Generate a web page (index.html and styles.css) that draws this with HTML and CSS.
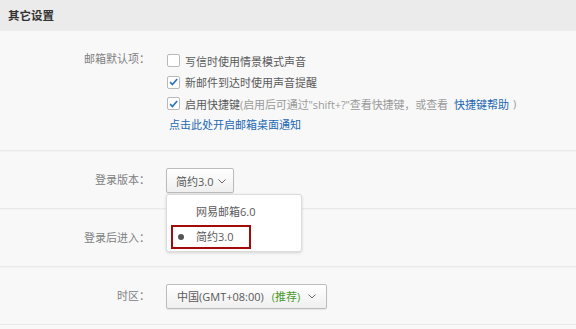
FILE: index.html
```html
<!DOCTYPE html>
<html lang="zh-CN">
<head>
  <meta charset="UTF-8" />
  <title>其它设置</title>
  <link rel="stylesheet" href="styles.css">
</head>
<body>
  <div class="panel">
    <div class="panel-head">其它设置</div>

    <div class="row row-top">
      <div class="label">邮箱默认项：</div>
      <div class="field">
        <div class="opt"><span class="check"></span>写信时使用情景模式声音</div>
        <div class="opt"><span class="check on"><svg width="12" height="12" viewBox="0 0 12 12"><path d="M2.3 6.2 L4.8 8.7 L10 2.8" fill="none" stroke="#2b6fc2" stroke-width="1.8"/></svg></span>新邮件到达时使用声音提醒</div>
        <div class="opt"><span class="check on"><svg width="12" height="12" viewBox="0 0 12 12"><path d="M2.3 6.2 L4.8 8.7 L10 2.8" fill="none" stroke="#2b6fc2" stroke-width="1.8"/></svg></span>启用快捷键<span class="hint">(启用后可通过"shift+?"查看快捷键，或查看</span><a class="link help">快捷键帮助</a><span class="hint">)</span></div>
        <a class="link notify">点击此处开启邮箱桌面通知</a>
      </div>
    </div>

    <div class="row">
      <div class="label">登录版本：</div>
      <div class="field">
        <div class="select-wrap">
          <div class="select">简约3.0<svg class="chev" width="8" height="5" viewBox="0 0 8 5"><path d="M0.5 0.5 L4 4 L7.5 0.5" fill="none" stroke="#666" stroke-width="1"/></svg></div>
          <div class="menu">
            <div class="menu-item">网易邮箱6.0</div>
            <div class="menu-item current"><span class="dot"></span>简约3.0</div>
          </div>
        </div>
      </div>
    </div>

    <div class="row">
      <div class="label">登录后进入：</div>
      <div class="field"></div>
    </div>

    <div class="row">
      <div class="label">时区：</div>
      <div class="field">
        <div class="select wide">中国(GMT+08:00)<span class="rec">(推荐)</span><svg class="chev" width="8" height="5" viewBox="0 0 8 5"><path d="M0.5 0.5 L4 4 L7.5 0.5" fill="none" stroke="#666" stroke-width="1"/></svg></div>
      </div>
    </div>
  </div>
</body>
</html>
```

FILE: styles.css
```css
body {
  margin: 0;
  background: #f8f8f8;
  font-family: "Open Sans", "Noto Sans CJK SC", sans-serif;
  font-size: 11px;
  color: #555;
}
.panel {
  width: 576px;
}
.panel-head {
  height: 31px;
  line-height: 32px;
  padding-left: 8px;
  background: #ebebeb;
  font-weight: bold;
  font-size: 11.5px;
  color: #333;
}
.row {
  display: flex;
  align-items: center;
  height: 57px;
  border-bottom: 1px solid #e9e9e9;
  box-shadow: 0 1px 0 #f3f3f3;
}
.row-top {
  align-items: flex-start;
  height: 120px;
  box-sizing: border-box;
}
.label {
  width: 150px;
  text-align: right;
  color: #808080;
  line-height: 16px;
}
.row-top .label {
  margin-top: 20px;
}
.field {
  margin-left: 16px;
}
.row-top .field {
  margin-top: 19px;
}
.opt {
  display: flex;
  align-items: center;
  height: 21.5px;
  color: #5a5a5a;
  white-space: nowrap;
}
.check {
  width: 11px;
  height: 11px;
  border: 1px solid #b9b9b9;
  border-radius: 2px;
  background: #fff;
  margin-left: 1px;
  margin-right: 5px;
  display: flex;
  align-items: center;
  justify-content: center;
}
.check svg {
  display: block;
}
.hint {
  color: #9a9a9a;
  letter-spacing: -0.1px;
}
.link {
  color: #2368b4;
  cursor: pointer;
}
.help {
  margin: 0 4px 0 6px;
}
.notify {
  display: block;
  margin-left: 3px;
  line-height: 20px;
}
.select-wrap {
  position: relative;
  margin-top: 2px;
}
.select {
  display: inline-flex;
  align-items: center;
  height: 23px;
  padding: 0 7px 0 9px;
  border: 1px solid #bcbcbc;
  border-radius: 2px;
  background: linear-gradient(#ffffff, #efefef);
  box-shadow: 0 1px 1px rgba(0,0,0,0.08);
  color: #5a5a5a;
  white-space: nowrap;
}
.chev {
  margin-left: 5px;
  margin-top: 1px;
}
.wide {
  width: 140px;
  padding: 0 9px 0 10px;
  margin-top: 1px;
}
.wide .chev {
  margin-left: 8px;
}
.rec {
  color: #4b9a2c;
  margin-left: 8px;
}
.menu {
  position: absolute;
  left: 0;
  top: 26px;
  width: 134px;
  height: 56px;
  background: #fff;
  border: 1px solid #dcdcdc;
  border-radius: 3px;
  box-shadow: 0 1px 3px rgba(0,0,0,0.15);
  z-index: 2;
}
.menu-item {
  height: 20px;
  line-height: 20px;
  padding-left: 29px;
  margin-top: 7px;
  color: #5a5a5a;
  position: relative;
}
.current {
  margin: 3px 0 0 4px;
  padding-left: 23px;
  width: 53px;
  border: 2px solid #a30b0b;
}
.dot {
  position: absolute;
  left: 5px;
  top: 7px;
  width: 6px;
  height: 6px;
  border-radius: 50%;
  background: #555;
}
```
